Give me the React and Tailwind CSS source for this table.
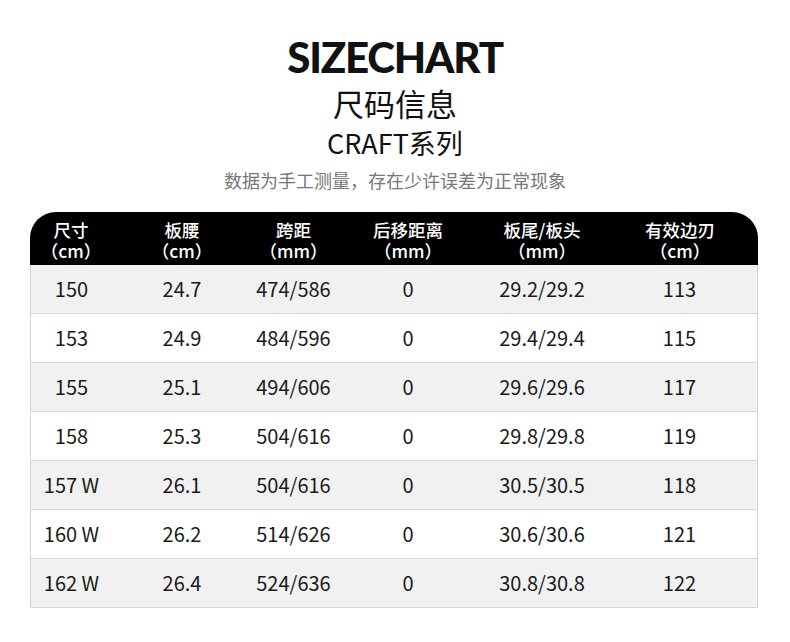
const rows = [
  ["150", "24.7", "474/586", "0", "29.2/29.2", "113"],
  ["153", "24.9", "484/596", "0", "29.4/29.4", "115"],
  ["155", "25.1", "494/606", "0", "29.6/29.6", "117"],
  ["158", "25.3", "504/616", "0", "29.8/29.8", "119"],
  ["157 W", "26.1", "504/616", "0", "30.5/30.5", "118"],
  ["160 W", "26.2", "514/626", "0", "30.6/30.6", "121"],
  ["162 W", "26.4", "524/636", "0", "30.8/30.8", "122"],
];

const heads = [
  ["尺寸", "（cm）"],
  ["板腰", "（cm）"],
  ["跨距", "（mm）"],
  ["后移距离", "（mm）"],
  ["板尾/板头", "（mm）"],
  ["有效边刃", "（cm）"],
];

// padding nudges so each column's text sits where the picture has it
const cellPad = ["pr-[15px]", "", "", "pr-[8px]", "", "pr-[8px]"];

const cjk = { fontFamily: '"Noto Sans CJK SC", "Noto Sans", sans-serif' };

export default function App() {
  return (
    <div className="min-h-screen bg-white" style={cjk}>
      <div className="flex flex-col items-center pt-[36px]">
        <h1
          className="text-[42px] leading-[42px] font-black text-[#111] tracking-[-1.2px]"
          style={{ fontFamily: "Lato, sans-serif" }}
        >
          SIZECHART
        </h1>
        <p className="mt-[5px] text-[31px] leading-[40px] text-[#111]">尺码信息</p>
        <p className="mt-[2px] text-[27px] leading-[36px] text-[#111]">CRAFT系列</p>
        <p className="mt-[7px] text-[18px] leading-[24px] text-[#777]">
          数据为手工测量，存在少许误差为正常现象
        </p>
      </div>

      <div className="ml-[30px] mt-[20px] w-[728px]">
        <div className="grid grid-cols-[97px_110px_113px_124px_136px_148px] h-[53px] pt-[3px] bg-black rounded-t-[26px] text-white">
          {heads.map(([a, b], i) => (
            <div
              key={a}
              className={`flex flex-col items-center justify-center text-[17.5px] leading-[21px] font-medium ${cellPad[i]}`}
            >
              <span>{a}</span>
              <span>{b}</span>
            </div>
          ))}
        </div>
        <div className="border-x border-[#d4d4d4]">
          {rows.map((r, ri) => (
            <div
              key={r[0]}
              className={`grid grid-cols-[96px_110px_113px_124px_136px_147px] h-[49px] border-b border-[#d6d6d6] ${
                ri % 2 === 0 ? "bg-[#f1f1f1]" : "bg-white"
              }`}
            >
              {r.map((v, i) => (
                <div
                  key={i}
                  className={`flex items-center justify-center text-[20px] text-[#1a1a1a] ${cellPad[i]}`}
                >
                  {v}
                </div>
              ))}
            </div>
          ))}
        </div>
      </div>
    </div>
  );
}
